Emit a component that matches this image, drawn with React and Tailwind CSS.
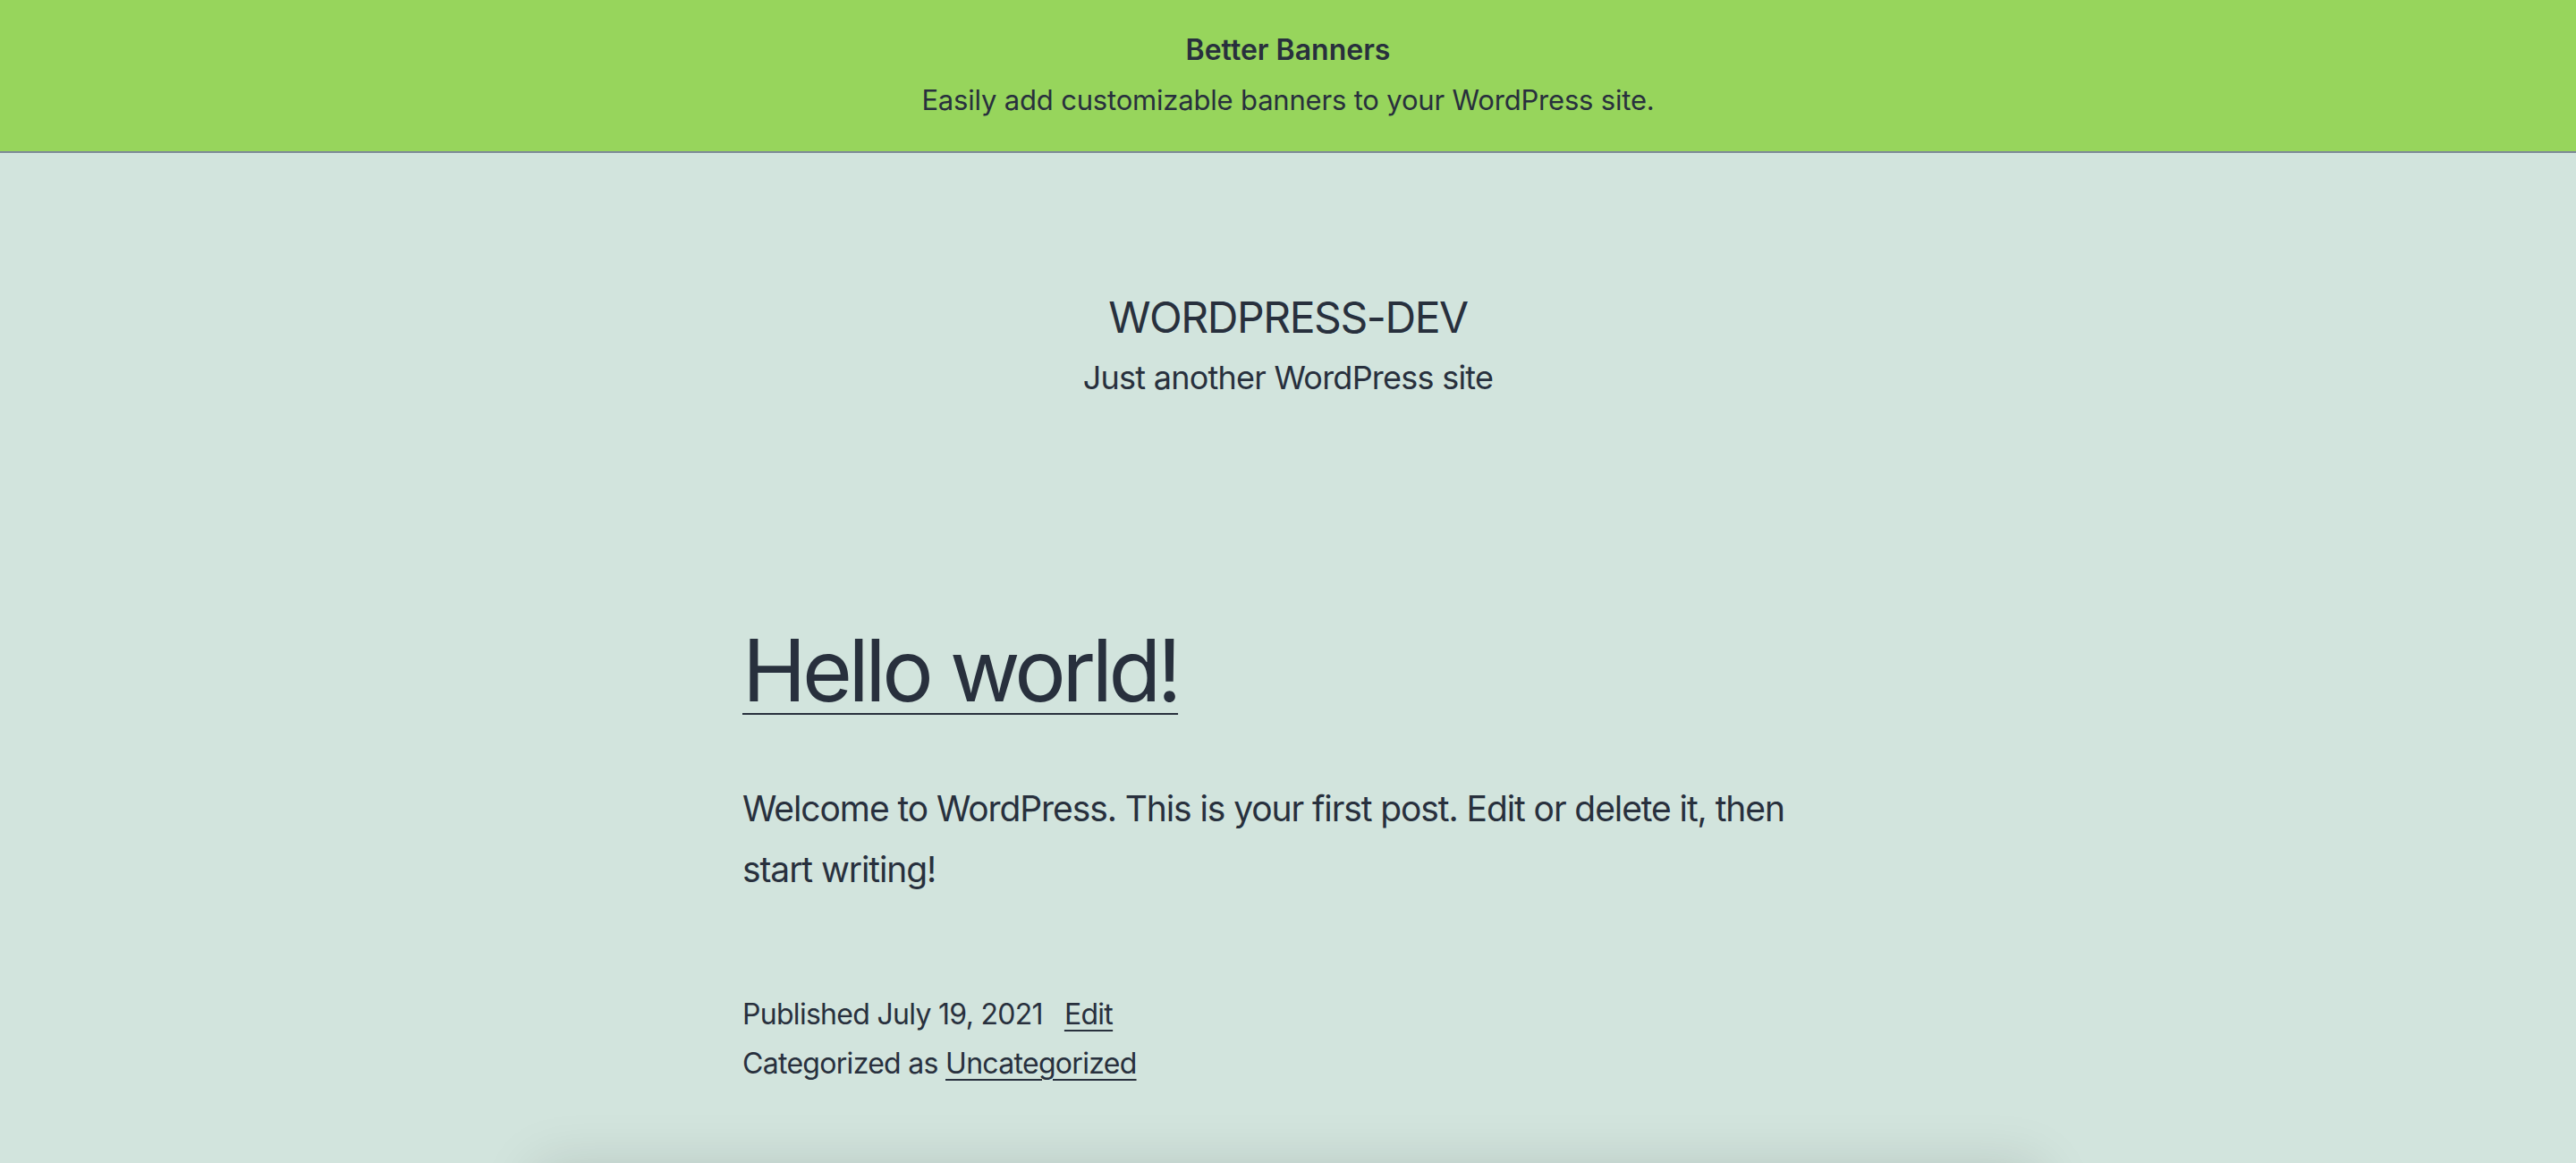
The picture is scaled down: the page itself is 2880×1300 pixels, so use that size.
import React from 'react';

const App = () => {
    return (
        <div className="min-h-screen bg-[#d2e4dd] text-[#28303d] font-[Inter,'Noto_Sans',sans-serif] overflow-hidden">
            {/* banner */}
            <div className="h-[171px] bg-[#97d55c] border-b-2 border-[#7e8a97] flex flex-col items-center pt-[32px] gap-[8px]">
                <p className="text-[32px] leading-[48px] font-semibold">Better Banners</p>
                <p className="text-[31px] leading-[48px] tracking-[-0.006em]">Easily add customizable banners to your WordPress site.</p>
            </div>

            {/* site header */}
            <header className="mt-[153px] flex flex-col items-center">
                <p className="text-[48px] leading-[62px] uppercase tracking-[-0.03em]">WORDPRESS-DEV</p>
                <p className="mt-[11px] text-[36px] leading-[50px] tracking-[-0.021em]">Just another WordPress site</p>
            </header>

            <main className="w-[1220px] mx-auto">
                <h2 className="mt-[240px] text-[96px] leading-[125px] font-normal tracking-[-0.046em]">
                    <a href="#" className="underline decoration-2 underline-offset-[13px]">Hello world!</a>
                </h2>
                <p className="mt-[58px] text-[39px] leading-[68px] tracking-[-0.028em]">
                    Welcome to WordPress. This is your first post. Edit or delete it, then start writing!
                </p>
                <footer className="mt-[100px] text-[32px] leading-[55px] tracking-[-0.022em]">
                    <p>
                        Published July 19, 2021
                        <a href="#" className="ml-[24px] underline decoration-2 underline-offset-[6px]">Edit</a>
                    </p>
                    <p>
                        Categorized as <a href="#" className="underline decoration-2 underline-offset-[6px]">Uncategorized</a>
                    </p>
                </footer>
            </main>

            {/* next block, only its shadow shows */}
            <div className="mt-[89px] mx-auto w-[1680px] h-[300px] bg-[#d2e4dd] shadow-[0_0_60px_rgba(0,0,0,0.14)]"></div>
        </div>
    );
};

export default App;
